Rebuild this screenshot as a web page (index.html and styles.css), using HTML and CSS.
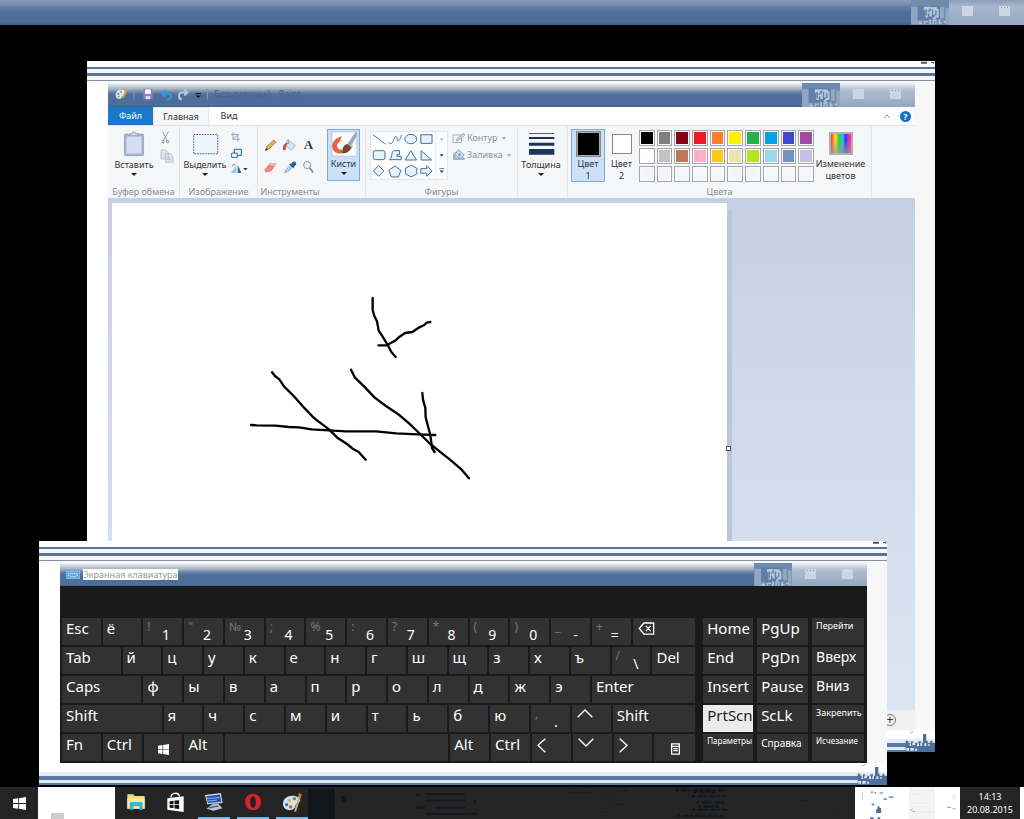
FILE: index.html
```html
<!DOCTYPE html>
<html lang="ru">
<head>
<meta charset="utf-8">
<title>Рабочий стол</title>
<link rel="stylesheet" href="styles.css">
</head>
<body>
<svg class="defs" aria-hidden="true">
  <defs>
    <symbol id="glitch" viewBox="0 0 113 70">
      <path fill="#93a6c0" d="M0 18h20v52H0zM86 18h12v34H86zM102 22h11v48h-11zM20 58h12v12H20z"/>
      <path fill="#5f7fa8" d="M20 14h66v44H20z"/>
      <path fill="#bac8da" d="M38 18h20v5h-4v8h5v-12h18v5h5v26h-9v5h-8v-5h5v-6h6V28h-4v14h-6V25h-4v22h-7v-8h-5v11h-7V28h-5z"/>
      <path fill="#5f7fa8" d="M43 26h4v18h-4zM50 28h3v7h-3z"/>
      <path fill="#b6c4d6" d="M38 60h12v4H38zM38 60h4v10h-4zM54 56h5v14h-5zM64 56h12v4H64zM64 56h4v14h-4zM72 62h4v8h-4zM82 56h5v14h-5zM82 64h10v4H82zM96 60h8v5H96zM24 64h8v6h-8z"/>
    </symbol>
    <symbol id="winlogo" viewBox="0 0 32 32">
      <path fill="currentColor" d="M0 5l13-2v12H0zM15 3l17-3v15H15zM0 17h13v12L0 27zM15 17h17v15l-17-3z"/>
    </symbol>
    <symbol id="corner" viewBox="0 0 90 66">
      <path fill="#4f7099" d="M2 32h8v6h8v-4h6v4h16v-4h8v4h6V12h10v20h4v6h8v-6h6v6h8v28H2z"/>
      <path fill="#dbe6f5" d="M14 40h4v8h-4zM22 38h8v8h-8zM36 40h6v8h-6zM46 38h5v10h-5zM58 40h6v8h-6zM70 42h4v6h-4zM4 54h8v8H4zM16 54h10v8H16zM30 56h6v6h-6z"/>
      <path fill="#aaa" d="M14 8l12-5v2l-8 5z"/>
    </symbol>
    <symbol id="frame-marks" viewBox="0 0 48 9">
      <path fill="#555" d="M6 2h18v6H6zM36 3h6l4-2v7h-3V6h-7z"/>
    </symbol>
  </defs>
</svg>

<main class="desktop">
  <header class="titlebar titlebar-max">
    <svg class="glitch" aria-hidden="true"><use href="#glitch"/></svg>
    <div class="caption-buttons"><button aria-label="Свернуть"></button><button class="dotted" aria-label="Закрыть"></button></div>
  </header>

  <section class="window paint" aria-label="Paint">
    <div class="frame-top"><svg aria-hidden="true"><use href="#frame-marks"/></svg></div>
    <div class="window-inner">
      <header class="titlebar">
        <div class="quick">
          <svg viewBox="100 90 290 44" width="97" height="15" aria-hidden="true">
            <path d="M105 117c0-12 10-18 20-17 10 2 13 10 9 15-3 4-8 1-10 6s-3 8-9 7c-6 0-10-5-10-11z" fill="#dceaf4" stroke="#8eabc5"/>
            <path d="M134 96l7 3-12 28-4-3z" fill="#e2a04b"/><circle cx="113" cy="113" r="3" fill="#3b86c8"/><circle cx="121" cy="107" r="3" fill="#df7b44"/><circle cx="114" cy="121" r="3" fill="#65af54"/>
            <path d="M160 98v32M379 98v32" stroke="#8299b7" stroke-width="3"/>
            <path d="M188 98h27v31h-27z" fill="#9a7bc0"/><path d="M193 100h17v13h-17z" fill="#fff"/><path d="M195 120h13v9h-13z" fill="#e8e0f0"/>
            <path d="M246 112h13c14 0 15 18 0 18M253 102l-10 10 10 9" fill="none" stroke="#2b9be5" stroke-width="6"/>
            <path d="M317 109h-12c-14 0-14 19-2 21M310 100l10 9-10 9" fill="none" stroke="#b4c8df" stroke-width="6"/>
            <path d="M344 112h16" stroke="#111" stroke-width="3"/><path d="M344 118h16l-8 7z" fill="#111"/>
          </svg>
          <span class="faded-title">Безымянный - Paint</span>
        </div>
        <svg class="glitch" aria-hidden="true"><use href="#glitch"/></svg>
        <div class="caption-buttons"><button aria-label="Свернуть окно"></button><button class="dotted" aria-label="Закрыть окно"></button></div>
      </header>

      <nav class="tabs">
        <button class="tab tab-file">Файл</button>
        <button class="tab tab-active">Главная</button>
        <button class="tab">Вид</button>
        <div class="tabs-end">
          <button aria-label="Свернуть ленту"><svg viewBox="0 0 8 6" width="8" height="6"><path d="M1 5l3-3 3 3" fill="none" stroke="#999"/></svg></button>
          <button class="help" aria-label="Справка">?</button>
        </div>
      </nav>

      <div class="ribbon">
        <section class="group g-clip">
          <div class="group-body">
            <button class="big"><svg viewBox="132 224 64 76" width="22" height="26"><rect x="136" y="233" width="56" height="63" rx="3" fill="#a6b2d2" stroke="#8b99bf" stroke-width="2"/><rect x="142" y="240" width="44" height="50" fill="#d4def1"/><path d="M152 238v-6h8v-5h8v5h8v6z" fill="#d8deeb" stroke="#8b99bf" stroke-width="2"/></svg><span>Вставить</span><i class="arrow"></i></button>
            <div class="stack">
              <button aria-label="Вырезать"><svg viewBox="236 224 36 40" width="12" height="13"><path d="M243 226l15 27M261 226l-15 27" stroke="#8d9cba" stroke-width="3"/><circle cx="245" cy="257" r="4" fill="none" stroke="#8d9cba" stroke-width="3"/><circle cx="259" cy="257" r="4" fill="none" stroke="#8d9cba" stroke-width="3"/></svg></button>
              <button aria-label="Копировать"><svg viewBox="230 277 42 42" width="14" height="14"><path d="M233 280h15l7 7v20h-22zM247 291h15l7 7v19h-22z" fill="#dce3f0" stroke="#a8b5cf" stroke-width="2"/><path d="M252 303h11M252 309h11" stroke="#a8b5cf" stroke-width="2"/></svg></button>
            </div>
          </div>
          <h2>Буфер обмена</h2>
        </section>

        <section class="group g-image">
          <div class="group-body">
            <button class="big"><svg viewBox="336 226 80 74" width="27" height="26"><rect x="341" y="235" width="71" height="57" fill="#eef5fc" stroke="#3b6ca5" stroke-width="3" stroke-dasharray="5 3"/></svg><span>Выделить</span><i class="arrow"></i></button>
            <div class="stack">
              <button aria-label="Обрезать"><svg viewBox="455 226 40 36" width="13" height="12"><path d="M464 230v21h22M458 236h21v22M464 251l18-16" fill="none" stroke="#8da1be" stroke-width="3"/></svg></button>
              <button aria-label="Изменить размер"><svg viewBox="452 280 40 34" width="13" height="11"><path d="M465 284h22v19h-22z" fill="#e2f0fa" stroke="#2b6294" stroke-width="3"/><path d="M457 296h17v13h-17z" fill="#fff" stroke="#2b6294" stroke-width="3"/></svg></button>
              <button aria-label="Повернуть"><svg viewBox="455 334 54 34" width="18" height="11"><path d="M474 338v24h-17z" fill="#9fc8e5"/><path d="M478 338l12 24h-12z" fill="#1f6f9e"/><path d="M461 340c2-4 6-5 10-3" fill="none" stroke="#54789d" stroke-width="3"/><path d="M495 346h13l-6 7z" fill="#222"/></svg></button>
            </div>
          </div>
          <h2>Изображение</h2>
        </section>

        <section class="group g-tools">
          <div class="group-body tools">
            <button aria-label="Карандаш"><svg viewBox="552 246 40 40" width="13" height="13"><path d="M556 281l4-11 22-21 7 7-22 21z" fill="#e7ad58" stroke="#8b6231" stroke-width="2"/><path d="M556 282l3-8 5 5z" fill="#333"/></svg></button>
            <button aria-label="Заливка цветом"><svg viewBox="607 244 44 42" width="15" height="14"><path d="M623 249l24 18-14 14-16-16z" fill="#d2e5f5" stroke="#7592b4" stroke-width="2"/><path d="M610 281c-3-14 3-23 16-23-7 6-7 12-9 23z" fill="#b85945"/><path d="M626 262v-14" stroke="#7592b4" stroke-width="2"/></svg></button>
            <button class="letter" aria-label="Текст">A</button>
            <button aria-label="Ластик"><svg viewBox="552 312 44 40" width="15" height="13"><path d="M555 339l18-22 20 3-17 24-18 3z" fill="#e58784"/><path d="M573 317l20 3-5 7-20-3z" fill="#f3b5b0"/></svg></button>
            <button aria-label="Палитра"><svg viewBox="609 311 42 40" width="14" height="13"><path d="M613 347l5-10 13-12 6 6-13 12z" fill="#b3d8ef" stroke="#618daf" stroke-width="2"/><path d="M627 321l14 13 2-6 5-5c4-6-3-13-9-9l-5 5z" fill="#295f91"/></svg></button>
            <button aria-label="Масштаб"><svg viewBox="665 311 40 42" width="13" height="14"><circle cx="681" cy="326" r="11" fill="#e5f1fb" stroke="#8795a8" stroke-width="3"/><path d="M689 335l10 14" stroke="#9a7a62" stroke-width="5"/></svg></button>
          </div>
          <h2>Инструменты</h2>
        </section>

        <section class="group g-brush">
          <button class="big selected brush"><svg viewBox="0 222 78 80" width="26" height="27"><path d="M3 227h74v73H3z" fill="#f8fafb" stroke="#aac0db" stroke-width="2"/><path d="M33 241c-36 7-38 44-12 50 22 4 40-7 46-25-8 9-22 18-36 15-20-4-16-24 5-29l-10 2z" fill="#e26643"/><path d="M36 274c8-16 24-12 24 0-4 14-18 20-27 16 4-5 0-10 3-16z" fill="#77472b"/><path d="M49 264l25-37 3 3v10l-18 31z" fill="#9aacbc"/></svg><span>Кисти</span><i class="arrow"></i></button>
        </section>

        <section class="group g-shapes">
          <div class="group-body">
            <svg class="gallery" viewBox="118 225 235 147" width="78" height="49" role="img" aria-label="Фигуры">
              <rect x="119" y="226" width="233" height="144" fill="#fafcfe" stroke="#d8dde5" stroke-width="2"/><path d="M316 226v144" stroke="#dce1e8" stroke-width="2"/>
              <g fill="#e5f4fc" stroke="#4b7190" stroke-width="3"><path d="M126 235l38 29"/><path fill="none" d="M174 259c10 8 12 1 16-9 4-12 9-10 10-1 0 12 8 5 13-12"/><ellipse cx="241" cy="249" rx="18" ry="14"/><path d="M271 236h34v26h-34z"/><rect x="128" y="284" width="35" height="27" rx="6"/><path d="M177 311c10-6 4-28 14-27h16v12h-8v5h13v10z"/><path d="M241 284l17 28h-34zM272 284v28h32zM144 329l16 16-16 16-16-16zM193 330l18 13-7 20h-22l-7-20zM242 328l17 9v17l-17 9-17-9v-17zM271 338h18v-9l16 16-16 16v-9h-18z"/></g>
              <path d="M329 252l5-6 5 6z" fill="#aaa"/><path d="M328 295h12l-6 7zM328 344h12l-6 7z" fill="#333"/><path d="M327 338h14" stroke="#333" stroke-width="2"/>
            </svg>
            <div class="shape-options">
              <button disabled><svg viewBox="364 230 40 34" width="13" height="11"><path d="M367 236h26v23h-26z" fill="#f5f8fc" stroke="#9caac4" stroke-width="3"/><path d="M377 255l3-9 20-15 4 6-19 15z" fill="#c8d2e3" stroke="#8c9abb" stroke-width="2"/></svg>Контур<i class="arrow pale"></i></button>
              <button disabled><svg viewBox="364 279 42 38" width="13" height="12"><path d="M384 281l19 16-12 15-17-15z" fill="#d4dfed" stroke="#8fa0bb" stroke-width="3"/><path d="M367 305c0-10 2-16 10-18v18h28v9h-38z" fill="#a5b3cb"/><circle cx="388" cy="297" r="5" fill="#91a2bd"/></svg>Заливка<i class="arrow pale"></i></button>
            </div>
          </div>
          <h2>Фигуры</h2>
        </section>

        <section class="group g-size">
          <button class="big"><svg viewBox="594 224 82 74" width="27" height="26"><path d="M597 228h77v3h-77zM597 240h77v6h-77zM597 257h77v9h-77zM597 276h77v18h-77z" fill="#1e355b"/></svg><span>Толщина</span><i class="arrow"></i></button>
        </section>

        <section class="group g-colors">
          <div class="group-body">
            <button class="big selected color-one"><b class="chip chip-black"></b><span>Цвет<br>1</span></button>
            <button class="big color-two"><b class="chip chip-white"></b><span>Цвет<br>2</span></button>
            <div class="palette" aria-label="Палитра цветов">
              <button class="c1" aria-label="Черный"></button><button class="c2" aria-label="Серый"></button><button class="c3" aria-label="Темно-красный"></button><button class="c4" aria-label="Красный"></button><button class="c5" aria-label="Оранжевый"></button><button class="c6" aria-label="Желтый"></button><button class="c7" aria-label="Зеленый"></button><button class="c8" aria-label="Бирюзовый"></button><button class="c9" aria-label="Индиго"></button><button class="c10" aria-label="Лиловый"></button>
              <button class="c11" aria-label="Белый"></button><button class="c12" aria-label="Светло-серый"></button><button class="c13" aria-label="Коричневый"></button><button class="c14" aria-label="Розовый"></button><button class="c15" aria-label="Золотой"></button><button class="c16" aria-label="Светло-желтый"></button><button class="c17" aria-label="Травяной"></button><button class="c18" aria-label="Голубой"></button><button class="c19" aria-label="Сизый"></button><button class="c20" aria-label="Светло-лиловый"></button>
              <button aria-label="Пусто 1"></button><button aria-label="Пусто 2"></button><button aria-label="Пусто 3"></button><button aria-label="Пусто 4"></button><button aria-label="Пусто 5"></button><button aria-label="Пусто 6"></button><button aria-label="Пусто 7"></button><button aria-label="Пусто 8"></button><button aria-label="Пусто 9"></button><button aria-label="Пусто 10"></button>
            </div>
            <button class="big edit-colors"><b class="rainbow"></b><span>Изменение<br>цветов</span></button>
          </div>
          <h2>Цвета</h2>
        </section>
      </div>

      <div class="workspace">
        <div class="canvas">
          <svg viewBox="0 0 616 507" width="616" height="507" role="img" aria-label="Рисунок">
            <g transform="translate(129 77) scale(.33333)" fill="none" stroke="#000" stroke-width="7" stroke-linecap="round" stroke-linejoin="round">
              <path d="M395 54v36l5 18 8 16 5 28 12 18 14 23 12 23 13 15"/>
              <path d="M412 196h24l15-8 12-6 13-12 16-11 22-3 21-14 15-7 7-7 11-2"/>
              <path d="M93 277l9 11 13 10 14 21 29 29 34 38 27 28 17 13 28 21 25 25 29 19 17 14 18 10 21 23"/>
              <path d="M30 435l17 1 57 1 40 4 30 1 38 6 52 3 51 3h90l61 6 64 3 53 2"/>
              <path d="M330 269l12 24 30 29 29 31 34 25 41 28 29 25 26 25 37 36 35 28 24 19 35 30 22 26"/>
              <path d="M544 339l2 20 7 25 1 28 7 27 7 26 5 39 8 12"/>
            </g>
          </svg>
        </div>
        <i class="resize-handle"></i>
      </div>
      <footer class="status"><button aria-label="Увеличить">+</button></footer>
    </div>
    <div class="frame-bottom"><svg aria-hidden="true"><use href="#corner"/></svg></div>
  </section>

  <section class="window osk" aria-label="Экранная клавиатура">
    <div class="frame-top"><svg aria-hidden="true"><use href="#frame-marks"/></svg></div>
    <div class="window-inner">
      <header class="titlebar">
        <div class="quick">
          <svg viewBox="0 0 42 24" width="14" height="8" aria-hidden="true"><path d="M1 1h40v22H1z" fill="#5fa8e4" stroke="#9fcdf1" stroke-width="2"/><path d="M6 8h30M6 14h4M32 14h4M13 17h16" stroke="#d8ecfb" stroke-width="3" stroke-dasharray="4 2"/></svg>
          <span class="osk-title">Экранная клавиатура</span>
        </div>
        <svg class="glitch" aria-hidden="true"><use href="#glitch"/></svg>
        <div class="caption-buttons"><button class="dotted" aria-label="Свернуть клавиатуру"></button><button aria-label="Закрыть клавиатуру"></button></div>
      </header>
      <div class="keyboard">
        <div class="keys-main">
          <div class="row"><button>Esc</button><button>ё</button><button class="dual"><sup>!</sup><em>1</em></button><button class="dual"><sup>"</sup><em>2</em></button><button class="dual"><sup>№</sup><em>3</em></button><button class="dual"><sup>;</sup><em>4</em></button><button class="dual"><sup>%</sup><em>5</em></button><button class="dual"><sup>:</sup><em>6</em></button><button class="dual"><sup>?</sup><em>7</em></button><button class="dual"><sup>*</sup><em>8</em></button><button class="dual"><sup>(</sup><em>9</em></button><button class="dual"><sup>)</sup><em>0</em></button><button class="dual"><sup>_</sup><em>-</em></button><button class="dual"><sup>+</sup><em>=</em></button><button class="w-back" aria-label="Backspace"><svg viewBox="0 0 50 40" width="17" height="13"><path d="M3 20L17 3h30v34H17zM23 12l15 16M38 12L23 28" fill="none" stroke="#fff" stroke-width="4"/></svg></button></div>
          <div class="row"><button class="w-tab">Tab</button><button>й</button><button>ц</button><button>у</button><button>к</button><button>е</button><button>н</button><button>г</button><button>ш</button><button>щ</button><button>з</button><button>х</button><button>ъ</button><button class="dual"><sup>/</sup><em>\</em></button><button class="w-del">Del</button></div>
          <div class="row"><button class="w-caps">Caps</button><button>ф</button><button>ы</button><button>в</button><button>а</button><button>п</button><button>р</button><button>о</button><button>л</button><button>д</button><button>ж</button><button>э</button><button class="w-enter">Enter</button></div>
          <div class="row"><button class="w-shift">Shift</button><button>я</button><button>ч</button><button>с</button><button>м</button><button>и</button><button>т</button><button>ь</button><button>б</button><button>ю</button><button class="dual"><sup>,</sup><em>.</em></button><button aria-label="Стрелка вверх"><svg viewBox="0 0 48 27" width="16" height="9"><path d="M2 25L24 3l22 22" fill="none" stroke="#fff" stroke-width="4"/></svg></button><button class="w-shift-r">Shift</button></div>
          <div class="row"><button>Fn</button><button>Ctrl</button><button class="centered" aria-label="Windows"><svg width="11" height="11"><use href="#winlogo"/></svg></button><button>Alt</button><button class="w-space" aria-label="Пробел"></button><button>Alt</button><button>Ctrl</button><button aria-label="Стрелка влево"><svg viewBox="0 0 27 45" width="9" height="15"><path d="M25 2L3 22l22 21" fill="none" stroke="#fff" stroke-width="4"/></svg></button><button aria-label="Стрелка вниз"><svg viewBox="0 0 48 27" width="16" height="9"><path d="M2 2l22 22L46 2" fill="none" stroke="#fff" stroke-width="4"/></svg></button><button aria-label="Стрелка вправо"><svg viewBox="0 0 27 45" width="9" height="15"><path d="M2 2l22 20L2 43" fill="none" stroke="#fff" stroke-width="4"/></svg></button><button class="w-menu centered" aria-label="Меню"><svg viewBox="0 0 28 36" width="9" height="12"><path d="M2 2h24v32H2zM2 10h24M7 17h14M7 23h14" fill="none" stroke="#fff" stroke-width="4"/></svg></button></div>
        </div>
        <div class="keys-side">
          <button>Home</button><button>PgUp</button><button class="small">Перейти</button>
          <button>End</button><button>PgDn</button><button class="medium">Вверх</button>
          <button>Insert</button><button>Pause</button><button class="medium">Вниз</button>
          <button class="pressed">PrtScn</button><button>ScLk</button><button class="small">Закрепить</button>
          <button class="tiny">Параметры</button><button class="help-key">Справка</button><button class="tiny">Исчезание</button>
        </div>
      </div>
    </div>
    <div class="frame-bottom"><svg aria-hidden="true"><use href="#corner"/></svg></div>
  </section>

  <footer class="taskbar">
    <button class="start" aria-label="Пуск"><svg width="13" height="13"><use href="#winlogo"/></svg></button>
    <div class="blank"></div>
    <div class="apps">
      <button aria-label="Проводник"><svg viewBox="378 118 60 54" width="20" height="18"><path d="M382 122h18l4 5h30v38h-52z" fill="#f5d778"/><path d="M382 134h52v31h-52z" fill="#ffe9a3"/><path d="M389 168v-18q0-5 5-5h29q5 0 5 5v18h-10v-10h-18v10z" fill="#36b5d8"/></svg></button>
      <button aria-label="Магазин"><svg viewBox="495 112 58 62" width="19" height="21"><path d="M499 130l50-6v48l-50-7z" fill="#fff"/><path d="M510 128c0-16 24-18 26-3" fill="none" stroke="#fff" stroke-width="4"/><path d="M506 139l12-1v10h-12zM521 137l14-1v12h-14zM506 151h12v9l-12-1zM521 151h14v12l-14-2z" fill="#111"/></svg></button>
      <button class="open" aria-label="Компьютер"><svg viewBox="611 112 62 60" width="20" height="20"><path d="M614 120l49-6 6 31-48 4z" fill="#c9d6e6"/><path d="M618 124l42-5 5 22-42 4z" fill="#2554b0"/><path d="M619 132l40-4M622 139l30-3" stroke="#80b6ec" stroke-width="3"/><path d="M635 150l20-3 13 14-28 8-21-6z" fill="#b8c4d2"/><path d="M626 160l30-6" stroke="#3156a4" stroke-width="4"/></svg></button>
      <button class="open" aria-label="Opera"><svg viewBox="733 114 56 56" width="18" height="18"><ellipse cx="761" cy="142" rx="25" ry="26" fill="#d7212d"/><ellipse cx="761" cy="142" rx="9" ry="19" fill="#232323"/></svg></button>
      <button class="open" aria-label="Paint"><svg viewBox="846 112 64 60" width="21" height="20"><path d="M849 147c1-17 17-27 37-23 18 4 20 17 9 20-10 2-5 11-12 18-13 11-35 3-34-15z" fill="#cfe0eb"/><path d="M899 116l6 4-16 52-6-1z" fill="#d5ab6d"/><path d="M897 114l9 4-3 12-7-3z" fill="#b77b45"/><circle cx="860" cy="150" r="5" fill="#2f73b6"/><circle cx="869" cy="137" r="5" fill="#e5b03f"/><circle cx="884" cy="132" r="5" fill="#4ca04c"/><circle cx="872" cy="157" r="5" fill="#d34f41"/></svg></button>
    </div>
    <svg class="noise" viewBox="0 0 540 31" preserveAspectRatio="xMinYMin slice" aria-hidden="true">
      <path fill="#11161b" d="M0 2h26v29H0zM32 9h5v6h-5z"/>
      <path stroke="#15191d" stroke-width="2" d="M114 7h38M114 13h38M123 20h29M114 26h50M104 8h4M104 20h9M160 14h3"/>
      <path stroke="#191d21" stroke-dasharray="3 2 6 1" d="M252 5h22M288 8h8M294 17h14M281 24h12M300 4h12M506 25h6M476 13h7"/>
      <path stroke="#12171d" stroke-width="2" stroke-dasharray="3 2 6 1" d="M356 3h50M372 9h32M376 15h28M372 22h36M358 28h44M374 5h20M378 19h20"/>
    </svg>
    <div class="tray"><svg viewBox="524 757 317 95" preserveAspectRatio="none" aria-hidden="true"><path fill="#f4f4f5" d="M687 757h78v95h-78zM818 775h12v20h-12z"/><path fill="#e6e6e8" d="M687 777h38v3h-38zM700 804h40v3h-40zM710 830h55v3h-55z"/><path fill="#526f94" d="M572 770h6v4h-6zM583 772h4v4h-4zM598 773h10v3h-10zM610 791h10v4h-10zM626 785h14v4h-14zM592 814h6v5h5v15h-15v-12h4zM574 807h8v4h-8zM570 847h10v5h-10zM592 847h8v5h-8z"/><path fill="#aaa" d="M546 775h2v20h-2zM690 824h8v3h-8zM698 828h8v3h-8zM802 816h12v3h-12zM818 820h10v3h-10z"/></svg></div>
    <button class="clock"><time>14:13</time><span>20.08.2015</span></button>
    <div class="edge"></div>
  </footer>
</main>
</body>
</html>
```
FILE: styles.css
```css
* { box-sizing: border-box; }
body { margin: 0; background: #000; font-family: "Noto Sans", "Open Sans", sans-serif; font-size: 9px; line-height: 12px; color: #333; }
button { margin: 0; padding: 0; border: 0; background: none; font: inherit; color: inherit; }
svg { display: block; flex: none; }
h2 { margin: 0; font-size: 9px; line-height: 12px; font-weight: 400; color: #8c8c8c; text-align: center; white-space: nowrap; }
i, em { font-style: normal; }
.defs { position: absolute; width: 0; height: 0; }

.desktop { position: relative; height: 100vh; overflow: hidden; display: flex; flex-direction: column; justify-content: space-between; }
.window { position: absolute; display: flex; flex-direction: column; background: #fff; }
.paint { left: 87px; right: 89px; top: 61px; bottom: 67px; }
.osk { left: 39px; right: 137px; bottom: 34px; }
.frame-top { display: flex; justify-content: flex-end; height: 22px; background: linear-gradient(#fff 0 6px, #5b7298 6px 8px, #f4f6fb 8px 12px, #5b7298 12px 15px, #f4f6fb 15px 19px, #8490a6 19px 20px, #f6f8fb 20px); }
.frame-top svg { width: 16px; height: 3px; }
.window-inner { flex: 1; min-height: 0; display: flex; flex-direction: column; padding: 0 20px 0 21px; background: linear-gradient(90deg, #fff 50%, #f7f7f7 50%); }
.frame-bottom { display: flex; justify-content: flex-end; align-items: flex-end; height: 22px; background: linear-gradient(#fff 0 9px, #e4ecf9 9px 13px, #5b7ba6 13px 17px, #dfeafa 17px 20px, #5b7ba6 20px); }
.frame-bottom svg { width: 30px; height: 22px; }

.titlebar { display: flex; flex: none; height: 24px; background: linear-gradient(#f4f6f6, #a5b4c6 6px, #5b799f 10px, #4d6e98 13px, #4d6e98 22px, #405f89); }
.osk .titlebar { height: 23px; }
.titlebar-max { height: 25px; background: linear-gradient(#8d9eb8, #7690b2 4px, #5777a0 9px, #4d6e98 14px, #4d6e98 22px, #405f89); justify-content: flex-end; }
.quick { flex: 1; display: flex; align-items: center; gap: 3px; padding-left: 6px; }
.paint .quick { padding-bottom: 3px; }
.faded-title { color: #48678f; }
.osk-title { background: #fff; color: #999; line-height: 11px; }
.glitch { width: 38px; height: 100%; background: #6f8bae; }
.caption-buttons { width: 75px; display: flex; gap: 26px; padding: 6px 13px; background: linear-gradient(#8a9dbb, #a7b7cc 6px, #94a9c4); }
.window .caption-buttons { background: linear-gradient(#eef1f3, #b0bed0 7px, #94a7c0); }
.caption-buttons button { width: 11px; height: 10px; background: #ccd5e1; }
.caption-buttons .dotted { background: linear-gradient(90deg, #8296b2 1px, transparent 1px) 2px 1px / 3px 1px repeat-x #ccd5e1; }

.tabs { display: flex; flex: none; height: 18px; background: #fff; }
.tab { width: 40px; font-size: 9px; }
.tab-file { width: 45px; background: #1979ca; color: #fff; }
.tab-active { width: 56px; background: #f5f6f7; border: 1px solid #e3e4e6; border-bottom: 0; }
.tabs-end { margin-left: auto; display: flex; align-items: center; gap: 9px; padding-right: 4px; }
.help { width: 11px; height: 11px; border-radius: 50%; background: #0f6fc0; color: #fff; font-weight: 700; line-height: 11px; }

.ribbon { display: flex; flex: none; height: 73px; background: #f5f6f7; border-top: 1px solid #e2e3e5; }
.group { position: relative; flex: none; display: flex; flex-direction: column; justify-content: space-between; padding: 3px 0 0; border-right: 1px solid #e4e5e7; }
.group-body { display: flex; }
.g-clip { width: 72px; }
.g-image { width: 78px; }
.g-tools { width: 65px; border-right-color: transparent; }
.g-brush { width: 43px; padding-left: 4px; }
.g-shapes { width: 152px; }
.g-size { width: 50px; }
.g-colors { width: 304px; }
.big { display: flex; flex-direction: column; align-items: center; height: 52px; padding-top: 2px; white-space: nowrap; }
.big span { margin-top: 2px; line-height: 12px; }
.arrow { width: 0; height: 0; margin-top: 2px; border: 3px solid transparent; border-top: 3px solid #222; border-bottom: 0; }
.arrow.pale { border-width: 3px 2px 0; border-top-color: #aaa; margin: 0 0 0 2px; }
.g-clip .big { width: 52px; }
.g-image .big { width: 50px; }
.g-size .big { width: 46px; }
.stack { display: flex; flex-direction: column; gap: 5px; padding-top: 2px; }
.selected { background: #cbe0f8; border: 1px solid #7dabdd; }
.brush { width: 33px; padding-top: 0; }
.brush span { margin-top: 1px; }
.tools { display: grid; grid-template-columns: repeat(3, 19px); grid-auto-rows: 22px; place-items: center; padding: 5px 0 0 3px; }
.letter { font: 700 13px/14px "Liberation Serif", serif; color: #213c62; }
.g-shapes .group-body { gap: 4px; padding: 2px 0 0 4px; }
.shape-options { display: flex; flex-direction: column; gap: 5px; padding-top: 1px; }
.shape-options button { display: flex; align-items: center; gap: 2px; color: #8f929a; height: 12px; }
.g-colors .group-body { padding-left: 3px; }
.color-one { width: 34px; height: 53px; padding-top: 1px; }
.color-two { width: 33px; padding-top: 5px; }
.color-one span { margin-top: 1px; }
.chip { flex: none; border: 1px solid #888; }
.chip-black { width: 25px; height: 26px; background: #000; box-shadow: inset 0 0 0 1px #aaa; }
.chip-white { width: 20px; height: 20px; background: #fff; }
.color-two span { margin-top: 4px; }
.palette { display: grid; width: 175px; margin: 0 2px 0 1px; grid-template-columns: repeat(10, 1fr); grid-template-rows: repeat(3, 16px); gap: 2px; padding: 1px 0; }
.palette button { border: 1px solid #a5a7aa; background: #f5f6f7; box-shadow: inset 0 0 0 1px #fafafa; background-clip: padding-box; }
.palette .c1 { background: #000; } .palette .c2 { background: #7f7f7f; } .palette .c3 { background: #880015; } .palette .c4 { background: #ed1c24; } .palette .c5 { background: #ff7f27; }
.palette .c6 { background: #fff200; } .palette .c7 { background: #22b14c; } .palette .c8 { background: #00a2e8; } .palette .c9 { background: #3f48cc; } .palette .c10 { background: #a349a4; }
.palette .c11 { background: #fff; } .palette .c12 { background: #c3c3c3; } .palette .c13 { background: #b97a57; } .palette .c14 { background: #ffaec9; } .palette .c15 { background: #ffc90e; }
.palette .c16 { background: #efe4b0; } .palette .c17 { background: #b5e61d; } .palette .c18 { background: #99d9ea; } .palette .c19 { background: #7092be; } .palette .c20 { background: #c8bfe7; }
.edit-colors { width: 49px; padding-top: 3px; }
.edit-colors span { margin-top: 3px; }
.rainbow { width: 24px; height: 23px; flex: none; border: 2px solid #b5b0b0; background: linear-gradient(transparent 30%, #999b), linear-gradient(90deg, #f33, #fd2 22%, #2c4 42%, #2ce 58%, #33e 73%, #e2c 88%, #f36); }

.workspace { position: relative; flex: 1; min-height: 0; display: flex; padding: 5px 188px 0 4px; overflow: hidden; background: linear-gradient(#c5d0e2, #dce6f3); }
.canvas { flex: 1; overflow: hidden; background: #fff; box-shadow: 5px 7px 0 #bac6da; }
.resize-handle { position: absolute; right: 184px; top: 248px; width: 5px; height: 5px; background: #fff; border: 1px solid #555; }
.status { flex: none; height: 20px; display: flex; justify-content: flex-end; align-items: center; padding-right: 19px; background: #f0f0f0; }
.status button { width: 12px; height: 12px; border: 1px solid #777; border-radius: 50%; font-size: 12px; line-height: 10px; }

.keyboard { display: flex; gap: 8px; padding: 32px 3px 2px 2px; background: #1a1a1a; }
.keys-main { flex: 634; display: grid; grid-auto-rows: 27px; gap: 2px; }
.row { display: flex; gap: 2px; }
.row button { flex: 39 1 39px; }
.keys-side { flex: 161; display: grid; grid-template-columns: 50fr 51fr 52fr; grid-auto-rows: 27px; column-gap: 4px; row-gap: 2px; }
.keyboard button { min-width: 0; display: flex; align-items: flex-start; padding: 1px 0 0 4px; background: #323232; color: #fff; font-size: 15px; line-height: 18px; text-align: left; white-space: nowrap; }
.keyboard button svg { margin: 3px 0 0 1px; }
.keyboard .centered { justify-content: center; align-items: center; padding: 0; }
.keyboard .dual { justify-content: space-between; padding: 1px 12px 0 4px; }
.dual sup { font-size: 12px; line-height: 16px; color: #777; }
.dual em { font-size: 14px; line-height: 20px; padding-top: 6px; }
.row .w-back { flex: 63 1 63px; }
.row .w-tab { flex: 59 1 59px; }
.row .w-del { flex: 43 1 43px; }
.row .w-caps { flex: 80 1 80px; }
.row .w-enter { flex: 104 1 104px; }
.row .w-shift { flex: 100 1 100px; }
.row .w-shift-r { flex: 83 1 83px; }
.row .w-space { flex: 224 1 224px; }
.row .w-menu { flex: 41 1 41px; }
.keyboard .medium { font-size: 14px; }
.keyboard .small { font-size: 9px; line-height: 14px; }
.keyboard .tiny { font-size: 8px; line-height: 12px; }
.keyboard .help-key { font-size: 10px; line-height: 16px; }
.keyboard .pressed { background: #ebebeb; color: #222; }

.taskbar { display: flex; height: 32px; background: #242424; color: #fff; }
.start { width: 38px; display: grid; place-items: center; }
.blank { width: 77px; background: linear-gradient(#ccc, #ccc) 13px 26px / 13px 6px no-repeat #fff; }
.apps { display: flex; gap: 7px; padding-left: 5px; }
.apps button { width: 32px; display: grid; place-items: center; border-bottom: 2px solid transparent; }
.apps .open { border-bottom-color: #76b9ed; }
.noise { flex: 1; width: 0; height: 32px; }
.tray { width: 105px; background: #fff; }
.tray svg { width: 100%; height: 100%; }
.clock { width: 60px; display: flex; flex-direction: column; justify-content: center; align-items: center; }
.clock time, .clock span { line-height: 13px; }
.edge { width: 4px; background: #fff; }
```
